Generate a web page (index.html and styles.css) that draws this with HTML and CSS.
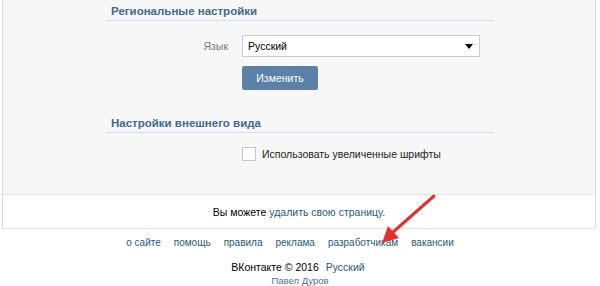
FILE: index.html
```html
<!DOCTYPE html>
<html lang="ru">
<head>
    <meta charset="UTF-8">
    <title>Настройки</title>
    <link rel="stylesheet" href="styles.css">
</head>
<body>
    <!-- Settings panel -->
    <div class="settings">
        <div class="section">
            <h2 class="section-title">Региональные настройки</h2>
            <div class="row">
                <label class="row-label" for="lang">Язык</label>
                <div class="select" id="lang">
                    <span>Русский</span>
                    <span class="select-arrow"></span>
                </div>
            </div>
            <div class="row">
                <span class="row-label"></span>
                <button class="btn">Изменить</button>
            </div>
        </div>

        <div class="section">
            <h2 class="section-title">Настройки внешнего вида</h2>
            <div class="row">
                <span class="row-label"></span>
                <label class="check"><span class="check-box"></span>Использовать увеличенные шрифты</label>
            </div>
        </div>
    </div>

    <div class="delete-row">
        Вы можете <a href="#">удалить свою страницу.</a>
    </div>

    <!-- Footer -->
    <div class="footer">
        <div class="footer-links">
            <a href="#">о сайте</a>
            <a href="#">помощь</a>
            <a href="#">правила</a>
            <a href="#">реклама</a>
            <a href="#">разработчикам</a>
            <a href="#">вакансии</a>
        </div>
        <div class="copy">ВКонтакте © 2016 <a href="#">Русский</a></div>
        <div class="author"><a href="#">Павел Дуров</a></div>
    </div>

    <!-- annotation arrow -->
    <svg class="arrow" width="70" height="60" viewBox="0 0 70 60">
        <line x1="62" y1="3" x2="20" y2="40" stroke="#e3302b" stroke-width="3" stroke-linecap="round"/>
        <polygon points="10,50 16,33 27,45" fill="#e3302b"/>
    </svg>
</body>
</html>
```

FILE: styles.css
```css
/* Reset */
* {
    margin: 0;
    padding: 0;
    box-sizing: border-box;
}

body {
    font-family: Tahoma, 'Liberation Sans', sans-serif;
    font-size: 10.5px;
    color: #000;
    background: #fff;
    position: relative;
}

a {
    color: #2b587a;
    text-decoration: none;
}

/* Settings panel */
.settings {
    margin: 0 4px 0 2px;
    background: #f7f7f7;
    border-left: 1px solid #dadada;
    border-right: 1px solid #dadada;
    border-bottom: 1px solid #e4e4e4;
    padding: 3px 0 24px;
}

.section {
    margin-left: 103px;
    width: 388px;
}

.section + .section {
    margin-top: 25px;
}

.section-title {
    font-size: 11.5px;
    font-weight: 700;
    color: #45688e;
    line-height: 16px;
    padding: 0 5px 1px;
    border-bottom: 1px solid #d9dee4;
    margin-bottom: 14px;
}

.row {
    display: flex;
    align-items: center;
    margin-bottom: 9px;
}

.row-label {
    width: 122px;
    margin-right: 14px;
    text-align: right;
    color: #777;
}

.select {
    width: 238px;
    height: 22px;
    background: #fff;
    border: 1px solid #c9cdd2;
    display: flex;
    align-items: center;
    justify-content: space-between;
    padding: 0 6px 0 5px;
}

.select-arrow {
    width: 0;
    height: 0;
    border-left: 4px solid transparent;
    border-right: 4px solid transparent;
    border-top: 5px solid #000;
}

.btn {
    width: 76px;
    height: 24px;
    background: #5b81a8;
    border: none;
    border-radius: 2px;
    color: #fff;
    font: inherit;
}

.check {
    display: flex;
    align-items: center;
    color: #222;
}

.check-box {
    width: 14px;
    height: 14px;
    background: #fff;
    border: 1px solid #c5c9ce;
    margin-right: 6px;
}

/* Delete row */
.delete-row {
    margin: 0 4px 0 2px;
    height: 34px;
    border-left: 1px solid #dadada;
    border-right: 1px solid #dadada;
    border-bottom: 1px solid #e0e0e0;
    display: flex;
    align-items: center;
    justify-content: center;
    gap: 3px;
}

/* Footer */
.footer {
    text-align: center;
    padding-top: 8px;
}

.footer-links {
    display: flex;
    justify-content: center;
    gap: 13px;
    margin-left: -20px;
    height: 14px;
    font-size: 10px;
}

.copy {
    margin-top: 10px;
    margin-left: -4px;
}

.copy a {
    margin-left: 4px;
}

.author {
    margin-top: 2px;
    font-size: 9.5px;
    line-height: 12px;
}

.author a {
    color: #4a6f94;
}

.arrow {
    position: absolute;
    left: 372px;
    top: 193px;
}
```
